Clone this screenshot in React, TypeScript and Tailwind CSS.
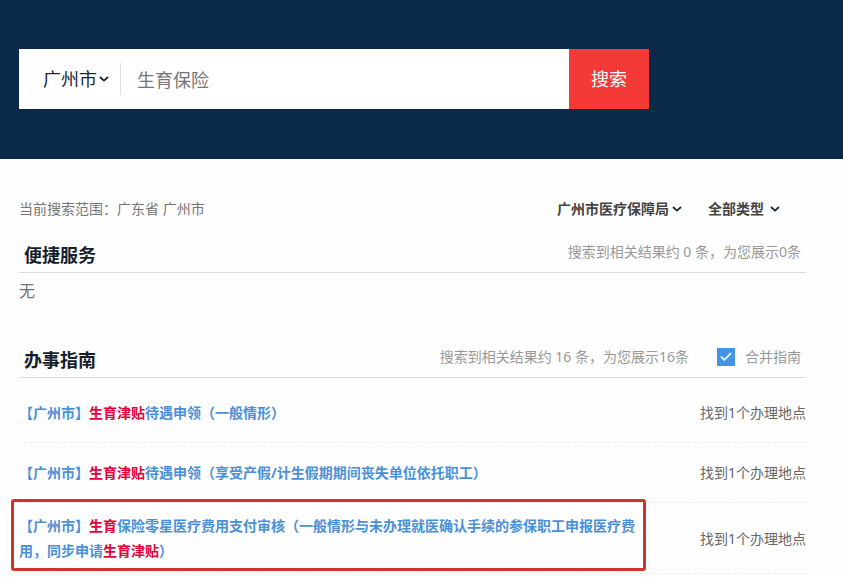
import { ReactNode } from 'react';
import { Check } from 'lucide-react';

const App = () => {
	return (
		<div className="min-h-screen bg-[#fefefe] font-['Noto_Sans','Noto_Sans_CJK_SC',sans-serif] text-[14px] text-[#666]">
			<header className="bg-[#0b294b] pt-[49px] pb-[50px] pl-[19px] pr-[37px]">
				<form className="flex h-[60px] max-w-[630px] items-center bg-white" onSubmit={(e) => e.preventDefault()}>
					<div className="relative flex items-center border-r border-[#ddd] pl-6">
						<select
							aria-label="城市"
							className="h-8 w-[77px] appearance-none bg-transparent text-[18px] text-[#1b2733] outline-none"
						>
							<option>广州市</option>
						</select>
						<Chevron className="right-[11px]" />
					</div>
					<input
						type="text"
						aria-label="搜索内容"
						defaultValue="生育保险"
						className="h-full min-w-0 flex-1 px-4 text-[18px] text-[#757575] outline-none"
					/>
					<button type="submit" className="h-full w-20 cursor-pointer bg-[#f33a37] text-[18px] text-white">
						搜索
					</button>
				</form>
			</header>

			<main className="pt-10 pl-[19px] pr-[37px]">
				<div className="flex items-center justify-between">
					<div className="leading-5 text-[#757575]">当前搜索范围：广东省 广州市</div>
					<div className="flex gap-6 pr-6">
						<FilterSelect label="部门" value="广州市医疗保障局" className="w-[127px]" />
						<FilterSelect label="类型" value="全部类型" className="w-[74px]" />
					</div>
				</div>

				<section className="mt-6">
					<SectionHeader title="便捷服务">
						<span>搜索到相关结果约 0 条，为您展示0条</span>
					</SectionHeader>
					<p className="pt-1.5 text-[16px] leading-6 text-[#757575]">无</p>
				</section>

				<section className="mt-[45px]">
					<SectionHeader title="办事指南">
						<span>搜索到相关结果约 16 条，为您展示16条</span>
						<label className="ml-7 flex cursor-pointer items-center gap-2.5">
							<span className="relative h-[18px] w-[18px]">
								<input
									type="checkbox"
									defaultChecked
									className="peer block h-[18px] w-[18px] appearance-none border border-[#4394e6] checked:bg-[#4394e6]"
								/>
								<Check
									className="pointer-events-none absolute top-0.5 left-0.5 hidden text-white peer-checked:block"
									size={14}
									strokeWidth={3}
								/>
							</span>
							合并指南
						</label>
					</SectionHeader>
					<ul className="pt-[5px]">
						<GuideItem>
							<Mark>生育津贴</Mark>待遇申领（一般情形）
						</GuideItem>
						<GuideItem>
							<Mark>生育津贴</Mark>待遇申领（享受产假/计生假期期间丧失单位依托职工）
						</GuideItem>
						<GuideItem highlighted>
							<Mark>生育</Mark>保险零星医疗费用支付审核（一般情形与未办理就医确认手续的参保职工申报医疗费用，同步申请
							<Mark>生育津贴</Mark>）
						</GuideItem>
					</ul>
				</section>
			</main>
		</div>
	);
};

export default App;

const Chevron = ({ className }: { className: string }) => {
	return (
		<div className={`pointer-events-none absolute inset-y-0 flex items-center text-[#1b2733] ${className}`}>
			<svg width="10" height="6" viewBox="0 0 10 6" fill="none" stroke="currentColor" strokeWidth="1.8">
				<path d="M1 1l4 3.6L9 1" />
			</svg>
		</div>
	);
};

interface FilterSelectProps {
	label: string;
	value: string;
	className: string;
}

const FilterSelect = ({ label, value, className }: FilterSelectProps) => {
	return (
		<div className="relative flex items-center text-[#444]">
			<select
				aria-label={label}
				className={`h-5 appearance-none bg-transparent font-bold leading-5 outline-none ${className}`}
			>
				<option>{value}</option>
			</select>
			<Chevron className="right-0.5" />
		</div>
	);
};

const SectionHeader = ({ title, children }: { title: string; children: ReactNode }) => {
	return (
		<div className="flex items-start justify-between border-b border-[#ddd] px-[5px] pb-[5px]">
			<h2 className="text-[18px] font-bold leading-6 text-[#14202c]">{title}</h2>
			<div className="flex leading-[18px] text-[#999]">{children}</div>
		</div>
	);
};

const Mark = ({ children }: { children: ReactNode }) => <span className="text-[#e60039]">{children}</span>;

const GuideItem = ({ highlighted, children }: { highlighted?: boolean; children: ReactNode }) => {
	return (
		<li className="flex min-h-15 items-center justify-between border-b border-dashed border-[#eee] py-2.5">
			<div className="relative max-w-[619px]">
				<a href="#" className="block font-bold leading-[25px] text-[#4a90d9]">
					【广州市】{children}
				</a>
				{highlighted && (
					<div className="pointer-events-none absolute -inset-x-2 -top-3.5 -bottom-2 rounded-[3px] border-3 border-[#d5322b]" />
				)}
			</div>
			<span className="shrink-0">找到1个办理地点</span>
		</li>
	);
};
